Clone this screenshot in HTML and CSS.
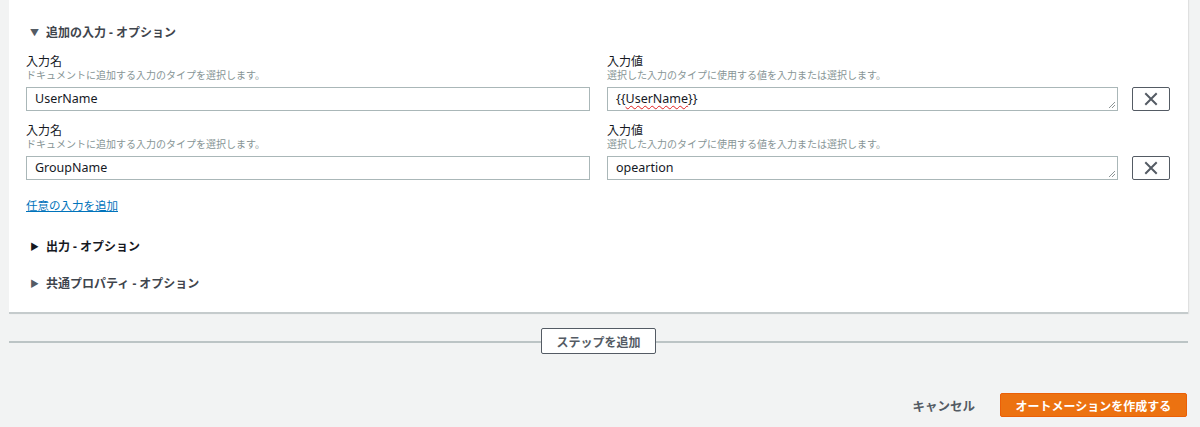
FILE: index.html
```html
<!DOCTYPE html>
<html lang="ja">
<head>
<meta charset="utf-8">
<link rel="stylesheet" href="styles.css">
</head>
<body>
<div class="panel">
  <div class="section-head open"><span class="tri">▼</span>追加の入力 - オプション</div>
  <div class="row">
    <div class="col-left">
      <div class="label">入力名</div>
      <div class="desc">ドキュメントに追加する入力のタイプを選択します。</div>
      <div class="input">UserName</div>
    </div>
    <div class="col-right">
      <div class="label">入力値</div>
      <div class="desc">選択した入力のタイプに使用する値を入力または選択します。</div>
      <div class="input area">{{<span class="spell">UserName</span>}}<svg class="grip" viewBox="0 0 10 10" width="10" height="10"><path d="M9 3 L3 9 M9 6 L6 9" stroke="#8d9596" stroke-width="1"/></svg></div>
    </div>
    <div class="col-btn">
      <button class="xbtn"><svg viewBox="0 0 14 14" width="14" height="14"><path d="M2 2 L12 12 M12 2 L2 12" stroke="#545b64" stroke-width="2" stroke-linecap="square"/></svg></button>
    </div>
  </div>
  <div class="row">
    <div class="col-left">
      <div class="label">入力名</div>
      <div class="desc">ドキュメントに追加する入力のタイプを選択します。</div>
      <div class="input">GroupName</div>
    </div>
    <div class="col-right">
      <div class="label">入力値</div>
      <div class="desc">選択した入力のタイプに使用する値を入力または選択します。</div>
      <div class="input area">opeartion<svg class="grip" viewBox="0 0 10 10" width="10" height="10"><path d="M9 3 L3 9 M9 6 L6 9" stroke="#8d9596" stroke-width="1"/></svg></div>
    </div>
    <div class="col-btn">
      <button class="xbtn"><svg viewBox="0 0 14 14" width="14" height="14"><path d="M2 2 L12 12 M12 2 L2 12" stroke="#545b64" stroke-width="2" stroke-linecap="square"/></svg></button>
    </div>
  </div>
  <a class="add-link" href="#">任意の入力を追加</a>
  <div class="section-head closed dark"><span class="tri">▶</span>出力 - オプション</div>
  <div class="section-head closed second"><span class="tri">▶</span>共通プロパティ - オプション</div>
</div>
<div class="step-bar">
  <button class="step-btn">ステップを追加</button>
</div>
<div class="footer">
  <button class="cancel">キャンセル</button>
  <button class="primary">オートメーションを作成する</button>
</div>
</body>
</html>
```
FILE: styles.css
```css
* { box-sizing: border-box; }
html, body { margin: 0; padding: 0; }
body {
  background: #f2f3f3;
  font-family: "Noto Sans", "Noto Sans CJK JP", sans-serif;
  color: #16191f;
  width: 1200px;
  height: 427px;
  overflow: hidden;
}
.panel {
  margin-left: 9px;
  width: 1179px;
  background: #fff;
  padding: 24px 18px 19px 17px;
  border-bottom: 2px solid #c5cbcc;
  box-shadow: 1px 0 1px rgba(0,0,0,0.08);
}
.section-head {
  font-size: 12px;
  font-weight: bold;
  line-height: 18px;
  color: #3f454d;
  display: flex;
  align-items: center;
}
.section-head .tri {
  font-size: 9px;
  width: 20px;
  padding-left: 4px;
  color: #545b64;
}
.section-head.dark { color: #16191f; margin-top: 23px; }
.section-head.dark .tri { color: #16191f; }
.section-head.second { margin-top: 19px; }
.row {
  display: flex;
  margin-top: 12px;
}
.row + .row { margin-top: 12px; }
.col-left { width: 564px; }
.col-right { width: 511px; margin-left: 17px; }
.col-btn { width: 38px; margin-left: 14px; display: flex; align-items: flex-end; }
.label {
  font-size: 12px;
  line-height: 15px;
  color: #16191f;
}
.desc {
  font-size: 10px;
  line-height: 13px;
  color: #879596;
}
.input {
  margin-top: 5px;
  height: 24px;
  border: 1px solid #aab7b8;
  font-size: 12.5px;
  line-height: 22px;
  padding-left: 8px;
  color: #16191f;
  position: relative;
}
.area .grip { position: absolute; right: 1px; bottom: 1px; }
.spell {
  text-decoration: underline wavy #e02020;
  text-decoration-thickness: 1px;
  text-underline-offset: 2px;
}
.xbtn {
  width: 38px;
  height: 24px;
  border: 1px solid #545b64;
  border-radius: 2px;
  background: #fff;
  padding: 0;
  display: flex;
  align-items: center;
  justify-content: center;
}
.add-link {
  display: inline-block;
  margin-top: 18px;
  font-size: 11.5px;
  line-height: 16px;
  color: #0073bb;
  text-decoration: underline;
}
.step-bar {
  margin: 14px 12px 0 9px;
  display: flex;
  align-items: center;
  justify-content: center;
  position: relative;
  height: 26px;
}
.step-bar::before {
  content: "";
  position: absolute;
  left: 0; right: 0; top: 13px;
  border-top: 2px solid #bcc4c5;
}
.step-btn {
  position: relative;
  width: 115px;
  height: 26px;
  background: #fff;
  border: 1px solid #545b64;
  border-radius: 2px;
  font-family: "Noto Sans CJK JP", sans-serif;
  font-size: 12px;
  font-weight: bold;
  color: #545b64;
  padding: 0;
}
.footer {
  display: flex;
  justify-content: flex-end;
  align-items: center;
  margin-top: 39px;
  padding-right: 13px;
}
.cancel {
  background: none;
  border: none;
  font-family: "Noto Sans CJK JP", sans-serif;
  font-size: 12.5px;
  font-weight: bold;
  color: #545b64;
  padding: 0;
  margin-right: 25px;
}
.primary {
  width: 187px;
  height: 24px;
  background: #ec7211;
  border: 1px solid #eb5f07;
  border-radius: 2px;
  color: #fff;
  font-family: "Noto Sans CJK JP", sans-serif;
  font-size: 12px;
  font-weight: bold;
  padding: 0;
}
```
